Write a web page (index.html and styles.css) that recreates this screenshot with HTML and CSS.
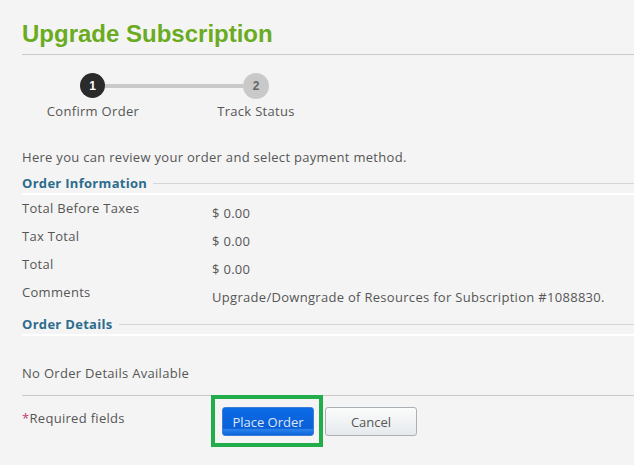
FILE: index.html
```html
<!DOCTYPE html>
<html>
<head>
<meta charset="utf-8">
<link rel="stylesheet" href="styles.css">
</head>
<body>
<div class="page">
  <h1 class="title">Upgrade Subscription</h1>
  <div class="stepper">
    <div class="track">
      <span class="dot dot-active">1</span>
      <span class="bar"></span>
      <span class="dot dot-todo">2</span>
    </div>
    <div class="labels">
      <span class="label">Confirm Order</span>
      <span class="label">Track Status</span>
    </div>
  </div>
  <p class="intro">Here you can review your order and select payment method.</p>
  <div class="section-head"><span class="section-title">Order Information</span><span class="rule"></span></div>
  <div class="info">
    <div class="row"><span class="key">Total Before Taxes</span><span class="val">$ 0.00</span></div>
    <div class="row"><span class="key">Tax Total</span><span class="val">$ 0.00</span></div>
    <div class="row"><span class="key">Total</span><span class="val">$ 0.00</span></div>
    <div class="row"><span class="key">Comments</span><span class="val">Upgrade/Downgrade of Resources for Subscription #1088830.</span></div>
  </div>
  <div class="section-head head2"><span class="section-title">Order Details</span><span class="rule"></span></div>
  <p class="empty">No Order Details Available</p>
  <div class="footer">
    <span class="required"><span class="star">*</span>Required fields</span>
    <div class="actions">
      <div class="highlight"><button class="btn btn-primary">Place Order</button></div>
      <button class="btn btn-default">Cancel</button>
    </div>
  </div>
</div>
</body>
</html>
```
FILE: styles.css
```css
html, body {
  margin: 0;
  padding: 0;
  background: #f4f4f4;
}
body {
  font-family: "Open Sans", "DejaVu Sans", sans-serif;
  font-size: 13px;
  letter-spacing: 0.3px;
  color: #565656;
  width: 634px;
  height: 465px;
  overflow: hidden;
}
.page {
  padding-left: 22px;
}
.title {
  margin: 0;
  padding-top: 20px;
  height: 34px;
  font-family: "Liberation Sans", Arial, sans-serif;
  font-weight: bold;
  font-size: 24px;
  letter-spacing: 0;
  line-height: 28px;
  color: #6aab1f;
  border-bottom: 1px solid #c9c9c9;
}
.stepper {
  padding-top: 18px;
}
.track {
  display: flex;
  align-items: center;
  margin-left: 58px;
  height: 25px;
}
.dot {
  width: 25px;
  height: 25px;
  border-radius: 50%;
  display: flex;
  align-items: center;
  justify-content: center;
  font-weight: bold;
  font-size: 12px;
  letter-spacing: 0;
  font-family: "Liberation Sans", Arial, sans-serif;
}
.dot-active {
  background: #2b2b2b;
  color: #fff;
}
.dot-todo {
  background: #c9c9c9;
  color: #666;
  width: 26px;
  height: 26px;
}
.bar {
  width: 138px;
  height: 4px;
  background: #c9c9c9;
}
.labels {
  display: grid;
  grid-template-columns: 100px 100px;
  column-gap: 63px;
  margin-left: 21px;
  margin-top: 4px;
}
.label {
  text-align: center;
  line-height: 18px;
  white-space: nowrap;
}
.intro {
  margin: 28px 0 0;
  line-height: 18px;
}
.section-head {
  display: flex;
  align-items: center;
  margin-top: 8px;
  height: 18px;
  border-bottom: 2px solid #fff;
  padding-bottom: 1px;
}
.section-title {
  font-weight: bold;
  color: #2c6c8c;
  white-space: nowrap;
  padding-right: 6px;
}
.rule {
  flex: 1;
  height: 1px;
  background: #d6d6d6;
}
.info {
  padding-top: 4px;
}
.row {
  display: flex;
  height: 28px;
}
.key {
  width: 190px;
  line-height: 18px;
}
.val {
  line-height: 18px;
  padding-top: 5px;
}
.head2 {
  margin-top: 4px;
}
.empty {
  margin: 28px 0 0;
  line-height: 18px;
  height: 31px;
  border-bottom: 1px solid #c9c9c9;
}
.footer {
  display: flex;
  align-items: flex-start;
}
.required {
  width: 189px;
  padding-top: 13px;
  line-height: 18px;
}
.star {
  color: #c0396b;
}
.actions {
  display: flex;
  align-items: flex-start;
  gap: 2px;
}
.highlight {
  margin-top: -1px;
  border: 4px solid #21ad4a;
  padding: 8px 5px 7px 7px;
}
.btn {
  font-family: "Open Sans", "DejaVu Sans", sans-serif;
  font-size: 13px;
  letter-spacing: 0;
  width: 92px;
  height: 29px;
  border-radius: 3px;
  padding: 0;
  cursor: pointer;
}
.btn-primary {
  background: linear-gradient(#0c6be6, #0a5fd8 75%, #2b82ea 80%, #0a64dd);
  border: 1px solid #3c7ed6;
  color: #dfe6f5;
}
.btn-default {
  margin-top: 11px;
  background: linear-gradient(#fbfbfb, #e6eaed);
  border: 1px solid #a9b0b6;
  color: #555;
}
```
